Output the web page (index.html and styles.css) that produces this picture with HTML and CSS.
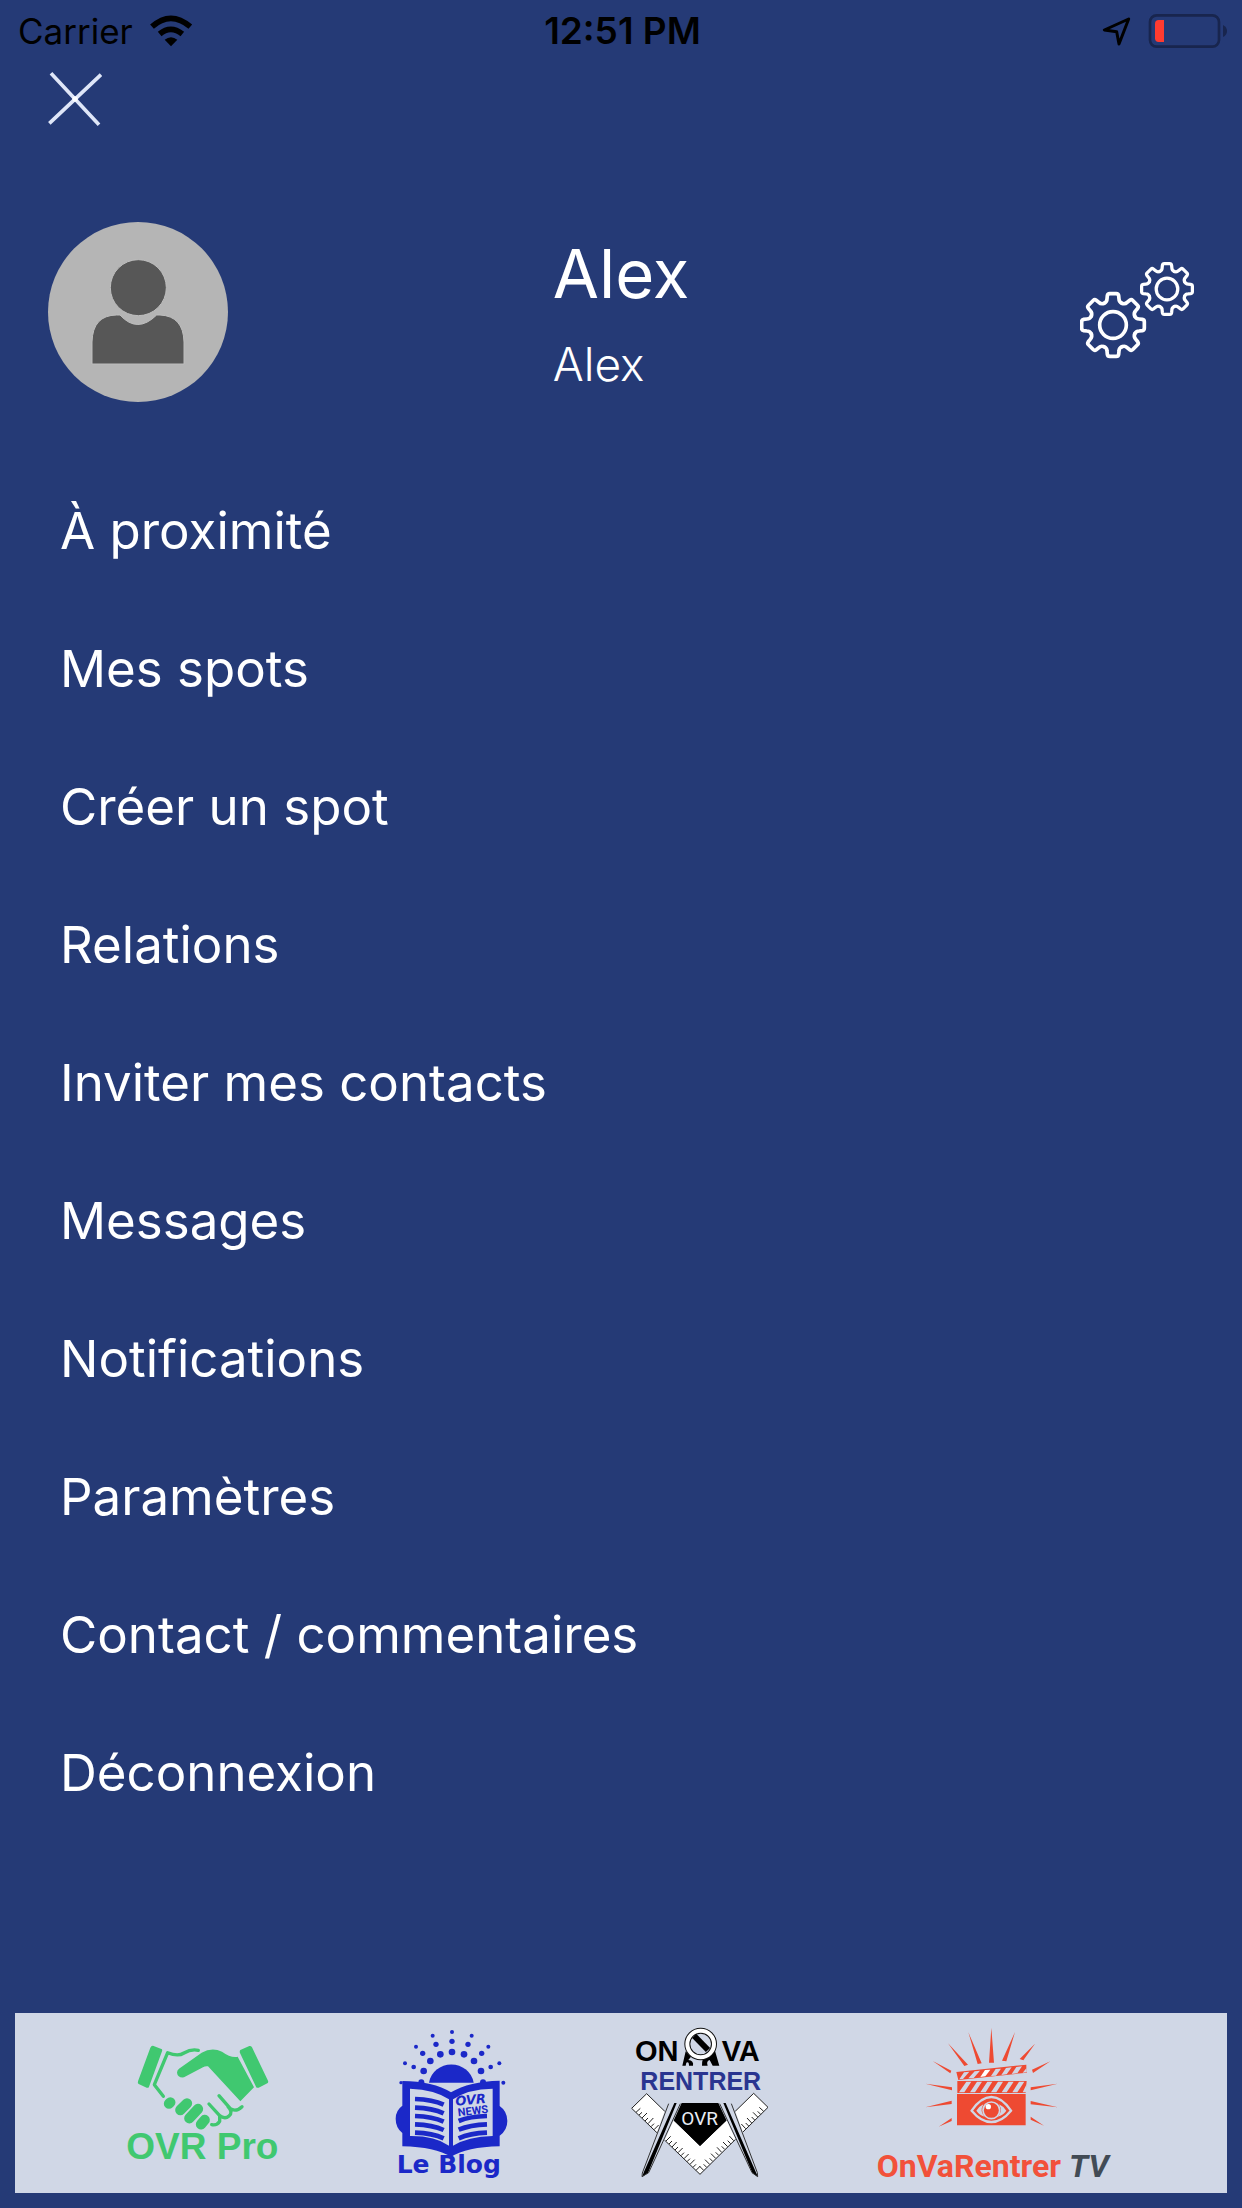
FILE: index.html
```html
<!DOCTYPE html>
<html lang="fr">
<head>
<meta charset="utf-8">
<meta name="viewport" content="width=device-width, initial-scale=1">
<title>Menu</title>
<link rel="stylesheet" href="styles.css">
</head>
<body>
<div class="screen">
  <div class="status">
    <div class="status-left">
      <span>Carrier</span>
      <svg class="wifi" viewBox="447 42 132 96" aria-hidden="true">
        <g fill="none" stroke="#000" stroke-width="17">
          <path d="M456 77Q512 27 571 77"/>
          <path d="M479 99Q512 71 547 99"/>
        </g>
        <path d="M494 116Q513 101 532 116L513 136Z"/>
      </svg>
    </div>
    <div class="status-time">12:51 PM</div>
    <div class="status-right">
      <svg class="locate" viewBox="126 48 87 87" aria-hidden="true">
        <path d="M206 54L133 87L170 92L177 129Z" fill="none" stroke="#000" stroke-width="9" stroke-linejoin="round"/>
      </svg>
      <svg class="battery" viewBox="264 36 237 108" aria-hidden="true">
        <rect x="270" y="43" width="207" height="94" rx="20" fill="none" stroke="#18254e" stroke-width="8"/>
        <path d="M489 72Q501 78 501 90Q501 102 489 108Z" fill="#18254e"/>
        <path d="M312 57V123H296Q285 123 285 112V68Q285 57 296 57Z" fill="#ff3b30"/>
      </svg>
    </div>
  </div>

  <button class="close" type="button" aria-label="Fermer">
    <svg viewBox="144 216 162 162" aria-hidden="true">
      <path d="M153 220L297 374M303 224L148 370" stroke="#dfe6f8" stroke-width="11" fill="none"/>
      <circle cx="225" cy="297" r="8" fill="#fff"/>
    </svg>
  </button>

  <header class="profile">
    <svg class="avatar" viewBox="0 0 540 540" role="img" aria-label="Photo de profil">
      <circle cx="270" cy="270" r="270" fill="#b5b5b5"/>
      <g fill="#575757" stroke="#bebebe" stroke-width="3">
        <path d="M132 426V360Q134 280 206 279H216Q268 336 326 279H336Q406 282 408 360V426Z"/>
        <circle cx="271" cy="197" r="84"/>
      </g>
    </svg>
    <div class="names">
      <h1 class="name">Alex</h1>
      <p class="handle">Alex</p>
    </div>
    <button class="settings" type="button" aria-label="Réglages">
      <svg viewBox="60 60 342 309" aria-hidden="true">
        <defs>
          <path id="tooth" d="M-27-65Q-18-69-18-78L-17-88Q-16-94-10-94H10Q16-94 17-88L18-78Q18-69 27-65"/>
          <g id="gear">
            <use href="#tooth"/>
            <use href="#tooth" transform="rotate(45)"/>
            <use href="#tooth" transform="rotate(90)"/>
            <use href="#tooth" transform="rotate(135)"/>
            <use href="#tooth" transform="rotate(180)"/>
            <use href="#tooth" transform="rotate(225)"/>
            <use href="#tooth" transform="rotate(270)"/>
            <use href="#tooth" transform="rotate(315)"/>
            <circle r="40"/>
          </g>
        </defs>
        <g fill="none" stroke="#fff" stroke-linecap="round">
          <use href="#gear" transform="translate(159 252)" stroke-width="11"/>
          <use href="#gear" transform="translate(321 144) scale(.81)" stroke-width="12"/>
        </g>
      </svg>
    </button>
  </header>

  <nav class="menu">
    <a href="#proximite">À proximité</a>
    <a href="#spots">Mes spots</a>
    <a href="#creer">Créer un spot</a>
    <a href="#relations">Relations</a>
    <a href="#inviter">Inviter mes contacts</a>
    <a href="#messages">Messages</a>
    <a href="#notifications">Notifications</a>
    <a href="#parametres">Paramètres</a>
    <a href="#contact">Contact / commentaires</a>
    <a href="#deconnexion">Déconnexion</a>
  </nav>

  <footer class="partners">
    <a class="pro" href="#pro">
      <svg viewBox="42 -21 474 540">
        <g fill="#40c870">
          <path d="M129 77L156 88Q158 91 155 97L117 200Q115 205 110 203L86 192Q82 190 84 184L121 83Q124 76 129 77Z"/>
          <path d="M391 90L418 78Q423 77 426 82L474 182Q476 187 472 190L446 203Q440 205 438 200L390 99Q388 94 391 90Z"/>
          <path d="M207 146L275 98Q306 80 336 95Q362 114 383 110L432 202L391 244L294 139Q285 138 279 142L222 172Q203 174 201 158Q201 151 207 146Z"/>
        </g>
        <g fill="none" stroke="#40c870" stroke-width="10" stroke-linecap="round" stroke-linejoin="round">
          <path d="M265 91Q244 86 222 99Q204 111 173 98L133 194L160 229"/>
          <path d="M327 227L361 266Q378 277 396 260M297 252L329 287Q345 299 357 288Q370 277 354 260M305 314Q321 317 329 304V287"/>
        </g>
        <g stroke="#40c870" stroke-width="31" stroke-linecap="round">
          <path d="M177 251L181 247"/><path d="M211 270L231 250"/><path d="M238 295L264 267"/><path d="M273 313L284 300"/>
        </g>
        <text class="arial" x="49" y="418" font-size="111" fill="#40c870">OVR Pro</text>
      </svg>
    </a>

    <a class="blog" href="#blog">
      <svg viewBox="-9 9 444 540">
        <g fill="#1b28c8">
          <path d="M147 218A68 66 0 0 1 281 218Z"/>
          <circle cx="216" cy="126" r="10"/><circle cx="181" cy="133" r="10"/><circle cx="252" cy="133" r="10"/>
          <circle cx="151" cy="153" r="10"/><circle cx="282" cy="153" r="10"/><circle cx="131" cy="183" r="10"/>
          <circle cx="303" cy="183" r="10"/><circle cx="124" cy="217" r="9"/><circle cx="309" cy="217" r="9"/>
          <circle cx="216" cy="94" r="8"/><circle cx="168" cy="103" r="8"/><circle cx="264" cy="103" r="8"/>
          <circle cx="128" cy="130" r="8"/><circle cx="305" cy="130" r="8"/><circle cx="101" cy="171" r="7"/>
          <circle cx="332" cy="171" r="7"/><circle cx="216" cy="66" r="6"/><circle cx="158" cy="77" r="6"/>
          <circle cx="275" cy="77" r="6"/><circle cx="108" cy="110" r="6"/><circle cx="325" cy="110" r="6"/>
          <circle cx="75" cy="160" r="6"/><circle cx="358" cy="160" r="6"/><circle cx="63" cy="218" r="5"/>
          <circle cx="370" cy="218" r="6"/>
          <path d="M67 213Q160 214 213 247Q268 214 359 212V288Q382 304 382 333Q382 361 359 377V409Q260 411 213 441Q166 411 67 409V369Q47 353 47 326Q47 301 67 287Z"/>
        </g>
        <path fill="#d0d7e6" d="M90 236Q165 239 207 268V407Q165 377 90 378ZM219 268Q264 237 338 236V378Q264 380 219 407Z"/>
        <g fill="none" stroke="#1b28c8" stroke-width="14">
          <path d="M105 267Q158 269 191 284M105 293Q158 295 191 310M105 318Q158 320 191 335M105 343Q158 345 191 360M105 368Q158 370 191 385"/>
          <path d="M236 333Q270 319 321 318M236 359Q270 345 321 343M236 385Q270 370 321 368"/>
        </g>
        <text class="news-top" transform="translate(227 287) rotate(-5)" font-size="39">OVR</text>
        <text class="roboto" transform="translate(235 319) rotate(-7)" font-size="33" fill="#1b28c8">NEWS</text>
        <text class="wide" x="50" y="490" font-size="75" fill="#1b28c8">Le Blog</text>
      </svg>
    </a>

    <a class="ovr" href="#onvarentrer">
      <svg viewBox="0 9 480 540">
        <path fill="#fff" stroke="#222" stroke-width="3" d="M80 251L240 407L401 250L444 292L240 493L35 295Z"/>
        <path fill="none" stroke="#222" stroke-width="3" d="M48 307l13-12M57 315l9-8M66 324l15-15M75 333l9-9M84 341l16-17M93 350l9-9M102 359l14-14M111 367l9-9M138 393l14-14M147 402l9-9M156 411l14-15M165 420l9-9M174 428l14-14M183 437l9-9M192 446l14-14M201 455l9-9M210 463l14-14M219 472l9-9M228 481l12-12M431 304l-13-12M422 313l-9-9M413 321l-14-14M404 330l-9-9M395 339l-14-15M386 348l-9-9M377 356l-13-14M341 392l-13-14M332 401l-9-9M323 410l-14-14M314 418l-9-9M305 427l-14-15M296 436l-9-9M287 445l-14-14M278 454l-9-9M269 463l-14-14M260 472l-9-9M251 481l-13-13"/>
        <path d="M183 279H297L325 326L240 407L156 326Z"/>
        <path fill="#d0d7e6" d="M143 279L185 279L89 488L65 501L66 488ZM295 279L337 279L413 488L414 501L394 488Z"/>
        <path d="M163 279L170 279L84 489L66 501L72 485ZM310 279L317 279L414 501L397 489Z"/>
        <path fill="none" stroke="#333" stroke-width="3" d="M146 281L67 489L66 500L86 488L181 281M299 281L396 488L413 500L412 488L334 281"/>
        <path d="M197 124L213 140L205 150Q222 152 219 167H207Q207 153 199 158L197 167H187ZM284 119L298 167H278L269 150Q258 153 263 167H246Q244 145 262 137Z"/>
        <circle cx="242" cy="102" r="40" fill="none" stroke="#111" stroke-width="18"/>
        <circle cx="242" cy="102" r="40" fill="none" stroke="#fff" stroke-width="12"/>
        <path d="M223 78L264 120" stroke="#000" stroke-width="18"/>
        <g class="arial">
          <text x="45" y="153" font-size="87">ON</text>
          <text x="305" y="153" font-size="87">VA</text>
          <text x="61" y="240" font-size="75" fill="#2a3590">RENTRER</text>
        </g>
        <text class="roboto plain" x="184" y="345" font-size="57" fill="#e8ecf5">OVR</text>
      </svg>
    </a>

    <a class="tv" href="#tv">
      <svg viewBox="45 9 729 540">
        <g fill="#ee4a32">
          <path d="M394 53L402 158H387ZM465 66L439 154L426 152ZM325 67L365 160L353 162ZM525 101L490 151L479 147ZM264 100L324 164L313 168ZM571 154L519 189L516 179ZM218 153L274 182L271 190ZM593 221L512 241V232ZM196 221L276 232V241ZM593 292L512 283V273ZM196 292L275 272V282ZM552 347L512 329V320ZM236 350L275 324V333Z"/>
          <path d="M291 252H497V346H291Z"/>
          <path d="M289 186L499 164V184L501 188L295 210ZM292 213H500L497 249H292Z"/>
        </g>
        <path fill="#d0d7e6" d="M312 187L328 185L309 207L298 208ZM344 184L360 182L341 204L325 205ZM407 177L393 198L408 197L423 176ZM438 174L424 195L440 193L455 172ZM469 171L455 192L472 190L486 169ZM499 175L488 188L500 187ZM319 215H334L313 247H297ZM351 215H366L345 247H330ZM382 215H397L377 247H361ZM414 215H429L409 247H393ZM446 215H461L440 247H425ZM477 215H493L472 247H457ZM500 222L488 247H500Z"/>
        <path fill="#fff" d="M375 180L391 179L376 199L361 201Z"/>
        <path d="M335 302Q363 261 394 261Q425 261 453 302Q425 336 394 336Q363 336 335 302Z" fill="none" stroke="#d0d7e6" stroke-width="7"/>
        <path fill="#d0d7e6" d="M349 302Q356 290 370 283Q358 304 374 320Q358 315 349 302ZM439 302Q432 290 417 283Q430 304 413 320Q430 315 439 302Z"/>
        <circle cx="394" cy="301" r="25" fill="none" stroke="#d0d7e6" stroke-width="5"/>
        <circle cx="385" cy="290" r="8" fill="#fff"/>
        <text class="roboto" x="50" y="502" font-size="96" fill="#f2513a">OnVaRentrer <tspan class="italic" fill="#424b55">TV</tspan></text>
      </svg>
    </a>
  </footer>
</div>
</body>
</html>
```
FILE: styles.css
```css
* {
  box-sizing: border-box;
}

body {
  margin: 0;
  background: #253a76;
  color: #fff;
  font-family: Inter, "Liberation Sans", sans-serif;
}

.screen {
  display: flex;
  flex-direction: column;
  min-height: 100vh;
  padding-bottom: 15px;
}

svg {
  display: block;
}

button {
  padding: 0;
  border: 0;
  background: none;
  cursor: pointer;
}

.status {
  display: grid;
  grid-template-columns: 1fr auto 1fr;
  align-items: center;
  height: 60px;
  padding: 0 15px 0 18px;
  color: #000;
  font-size: 35px;
  line-height: 62px;
}

.status-left,
.status-right {
  display: flex;
  align-items: center;
}

.status-left {
  gap: 16px;
}

.status-right {
  justify-content: flex-end;
  gap: 17px;
}

.status-time {
  font-size: 37px;
  font-weight: 600;
}

.wifi {
  width: 44px;
  height: 32px;
}

.locate {
  width: 29px;
  height: 29px;
}

.battery {
  width: 79px;
  height: 36px;
}

.close {
  width: 54px;
  height: 54px;
  margin: 12px 48px 0;
}

.profile {
  display: grid;
  grid-template-columns: 1fr auto 1fr;
  align-items: center;
  margin-top: 96px;
  padding: 0 48px;
}

.avatar {
  width: 180px;
  height: 180px;
}

.name,
.handle {
  margin: 0;
}

.name {
  font-size: 67px;
  font-weight: 400;
  line-height: 104px;
}

.handle {
  font-size: 46px;
  font-weight: 300;
  line-height: 76px;
}

.settings {
  justify-self: end;
  width: 114px;
  height: 103px;
}

.menu {
  display: flex;
  flex-direction: column;
  padding: 60px;
}

.menu a {
  color: #fff;
  font-size: 51px;
  line-height: 138px;
  text-decoration: none;
}

.partners {
  display: flex;
  justify-content: center;
  gap: 95px;
  margin: auto 15px 0;
  background: #d0d7e6;
}

.partners svg {
  width: 100%;
  height: 180px;
}

.pro {
  width: 158px;
}

.blog {
  width: 148px;
}

.ovr {
  width: 160px;
}

.tv {
  width: 243px;
}

.arial {
  font-family: "Liberation Sans", Arial, sans-serif;
  font-weight: 700;
}

.wide {
  font-family: "DejaVu Sans", sans-serif;
  font-weight: 700;
}

.news-top {
  fill: #1b28c8;
  font-family: "DejaVu Sans", sans-serif;
  font-style: italic;
  font-weight: 700;
}

.roboto {
  font-family: Roboto, sans-serif;
  font-weight: 700;
}

.plain {
  font-weight: 400;
}

.italic {
  font-style: italic;
}
```
